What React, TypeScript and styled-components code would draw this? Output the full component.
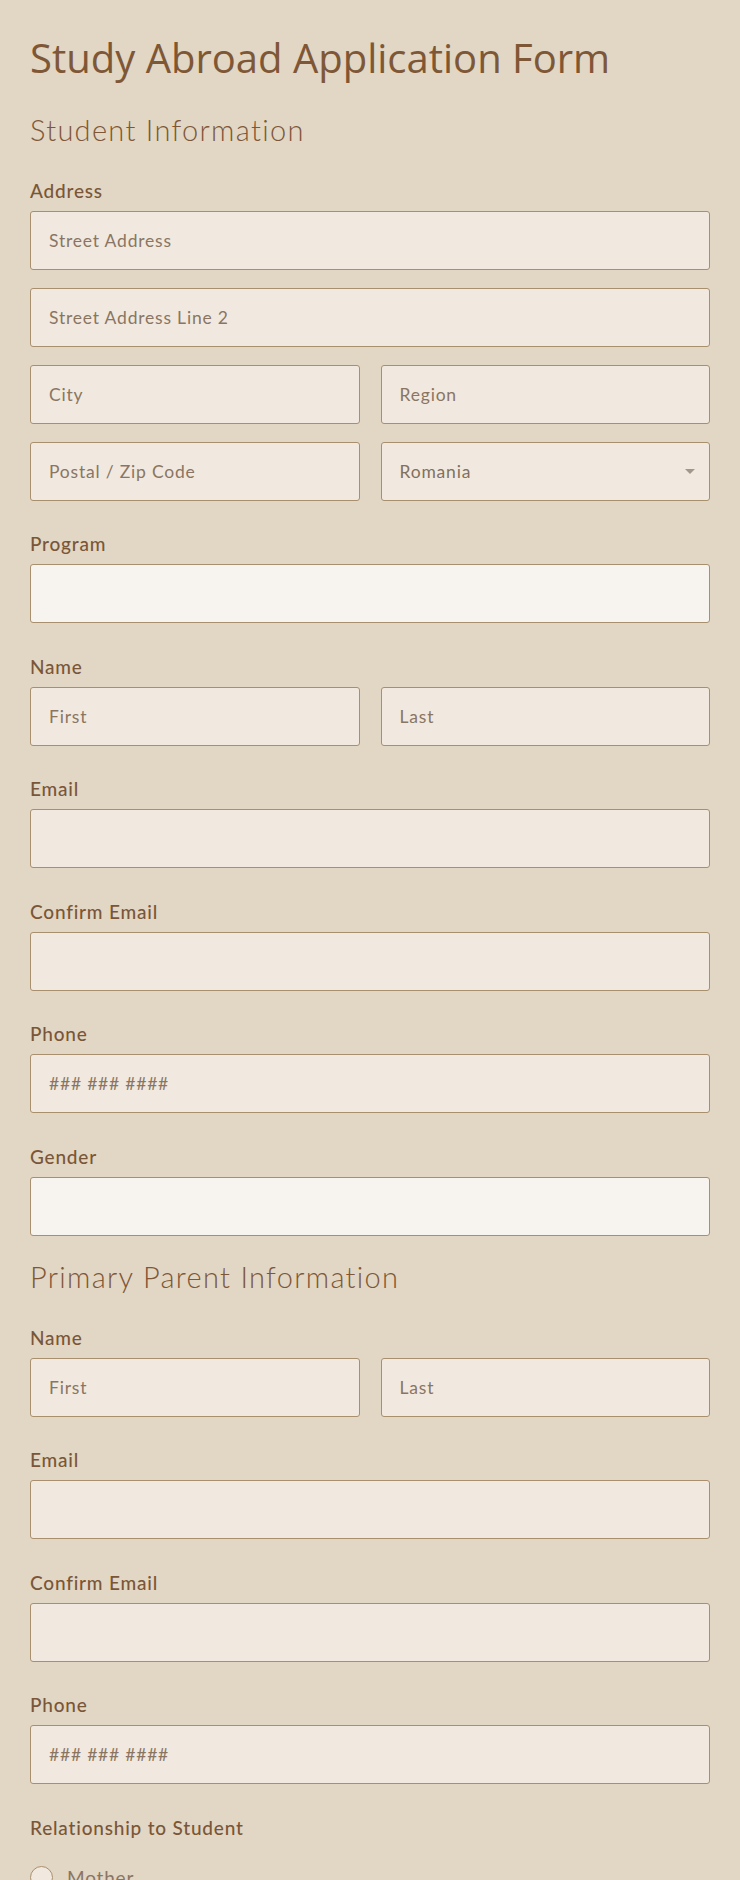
import { FC } from "react";
import styled, { createGlobalStyle } from "styled-components";

const GlobalStyle = createGlobalStyle`
  html, body {
    margin: 0;
    padding: 0;
    background: #e2d6c4;
  }
  * {
    box-sizing: border-box;
  }
`;

type FieldProps = { label: string; children: React.ReactNode };

const Field: FC<FieldProps> = ({ label, children }) => (
  <FieldWrap>
    <Label>{label}</Label>
    {children}
  </FieldWrap>
);

const NameRow: FC = () => (
  <Row>
    <Input placeholder="First" />
    <Input placeholder="Last" />
  </Row>
);

const App: FC = () => {
  return (
    <Page>
      <GlobalStyle />
      <Title>Study Abroad Application Form</Title>

      <Sections>
        <Section>
          <Heading>Student Information</Heading>
          <Fields>
            <Field label="Address">
              <Stack>
                <Input placeholder="Street Address" />
                <Input placeholder="Street Address Line 2" />
                <Row>
                  <Input placeholder="City" />
                  <Input placeholder="Region" />
                </Row>
                <Row>
                  <Input placeholder="Postal / Zip Code" />
                  <SelectBox>
                    <SelectValue>Romania</SelectValue>
                    <Caret />
                  </SelectBox>
                </Row>
              </Stack>
            </Field>
            <Field label="Program">
              <Input $light />
            </Field>
            <Field label="Name">
              <NameRow />
            </Field>
            <Field label="Email">
              <Input type="email" />
            </Field>
            <Field label="Confirm Email">
              <Input type="email" />
            </Field>
            <Field label="Phone">
              <Input placeholder="### ### ####" />
            </Field>
            <Field label="Gender">
              <Input $light />
            </Field>
          </Fields>
        </Section>

        <Section>
          <Heading>Primary Parent Information</Heading>
          <Fields>
            <Field label="Name">
              <NameRow />
            </Field>
            <Field label="Email">
              <Input type="email" />
            </Field>
            <Field label="Confirm Email">
              <Input type="email" />
            </Field>
            <Field label="Phone">
              <Input placeholder="### ### ####" />
            </Field>
            <FieldWrap>
              <Label>Relationship to Student</Label>
              <Radios>
                <RadioRow>
                  <Radio />
                  <RadioText>Mother</RadioText>
                </RadioRow>
              </Radios>
            </FieldWrap>
          </Fields>
        </Section>
      </Sections>
    </Page>
  );
};

const Page = styled.div`
  padding: 34px 30px 40px;
  height: 1880px;
  overflow: hidden;
`;

const Title = styled.h1`
  margin: 0;
  font-family: "Open Sans", sans-serif;
  font-weight: 400;
  font-size: 40px;
  line-height: 48px;
  color: #7e5737;
`;

const Sections = styled.div`
  display: flex;
  flex-direction: column;
  gap: 24.5px;
  margin-top: 31px;
`;

const Section = styled.section`
  display: flex;
  flex-direction: column;
`;

const Heading = styled.h2`
  margin: 0 0 32.5px;
  font-family: "Lato", sans-serif;
  font-weight: 300;
  font-size: 29px;
  line-height: 34px;
  letter-spacing: 1.3px;
  color: #7e5737;
`;

const Fields = styled.div`
  display: flex;
  flex-direction: column;
  gap: 32.5px;
`;

const FieldWrap = styled.div`
  display: flex;
  flex-direction: column;
`;

const Label = styled.label`
  font-family: "Lato", sans-serif;
  font-weight: 500;
  font-size: 19px;
  line-height: 22px;
  letter-spacing: 0.8px;
  color: #7a5638;
  margin-bottom: 9px;
`;

const Stack = styled.div`
  display: flex;
  flex-direction: column;
  gap: 18px;
`;

const Row = styled.div`
  display: grid;
  grid-template-columns: 1fr 1fr;
  gap: 21px;
`;

const Input = styled.input<{ $light?: boolean }>`
  display: block;
  width: 100%;
  height: 59px;
  padding: 0 18px;
  border: 1px solid #a88f6e;
  border-radius: 3px;
  background: ${(p) => (p.$light ? "#f7f3ee" : "#f1e9df")};
  font-family: "Lato", sans-serif;
  font-size: 17.5px;
  letter-spacing: 0.8px;
  color: #6e5846;
  outline: none;

  &::placeholder {
    color: #8a7563;
  }
`;

const SelectBox = styled.div`
  position: relative;
  display: flex;
  align-items: center;
  height: 59px;
  padding: 0 18px;
  border: 1px solid #a88f6e;
  border-radius: 3px;
  background: #f1e9df;
`;

const SelectValue = styled.span`
  font-family: "Lato", sans-serif;
  font-size: 17.5px;
  letter-spacing: 0.8px;
  color: #82705f;
`;

const Caret = styled.span`
  position: absolute;
  right: 14px;
  top: 50%;
  margin-top: -2px;
  width: 0;
  height: 0;
  border-left: 5px solid transparent;
  border-right: 5px solid transparent;
  border-top: 5px solid #a3978a;
`;

const Radios = styled.div`
  display: flex;
  flex-direction: column;
  margin-top: 18px;
`;

const RadioRow = styled.div`
  display: flex;
  align-items: center;
  gap: 14px;
`;

const Radio = styled.span`
  width: 23px;
  height: 23px;
  border-radius: 50%;
  border: 1px solid #a88f6e;
  background: #f1e9df;
  flex-shrink: 0;
`;

const RadioText = styled.span`
  font-family: "Lato", sans-serif;
  font-size: 19px;
  letter-spacing: 0.8px;
  color: #8a7563;
`;

export default App;
